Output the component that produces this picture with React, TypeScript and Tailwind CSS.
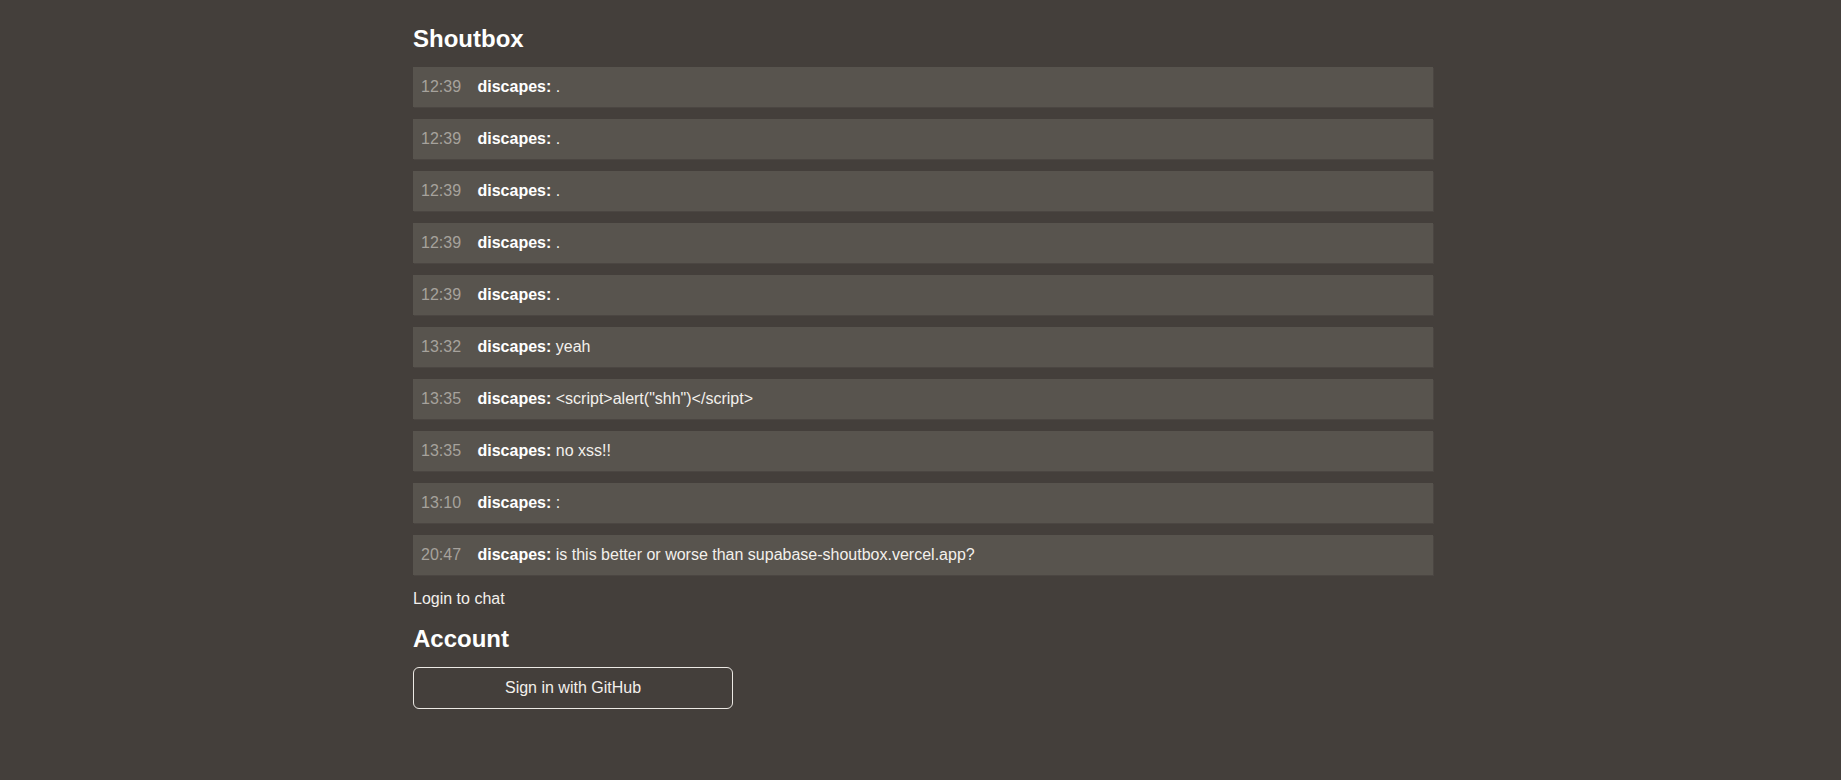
const MESSAGES = [
  { time: "12:39", user: "discapes", text: "." },
  { time: "12:39", user: "discapes", text: "." },
  { time: "12:39", user: "discapes", text: "." },
  { time: "12:39", user: "discapes", text: "." },
  { time: "12:39", user: "discapes", text: "." },
  { time: "13:32", user: "discapes", text: "yeah" },
  { time: "13:35", user: "discapes", text: '<script>alert("shh")</script>' },
  { time: "13:35", user: "discapes", text: "no xss!!" },
  { time: "13:10", user: "discapes", text: ":" },
  { time: "20:47", user: "discapes", text: "is this better or worse than supabase-shoutbox.vercel.app?" },
];

export default function App() {
  return (
    <div className="min-h-[780px] bg-[#443f3b] text-[#f3f0ec] font-['Liberation_Sans',Arial,sans-serif] flex justify-center pl-[5px]">
      <main className="w-[1020px] pt-[23px] flex flex-col gap-3">
        <h2 className="text-2xl leading-8 font-bold text-white">Shoutbox</h2>

        {MESSAGES.map((m, i) => (
          <div
            key={i}
            className="h-10 px-2 py-2 text-base leading-6 bg-[#58544e] shadow-[1px_1px_0_rgba(255,255,255,0.04)]"
          >
            <span className="text-[#a6a29c] mr-3">{m.time}</span>{" "}
            <span className="font-bold text-white">{m.user}:</span> {m.text}
          </div>
        ))}

        <p className="text-base leading-6">Login to chat</p>

        <h2 className="text-2xl leading-8 font-bold text-white">Account</h2>

        <button className="w-[320px] h-[42px] border border-[#ece9e4] rounded-md text-base text-[#f3f0ec]">
          Sign in with GitHub
        </button>
      </main>
    </div>
  );
}
